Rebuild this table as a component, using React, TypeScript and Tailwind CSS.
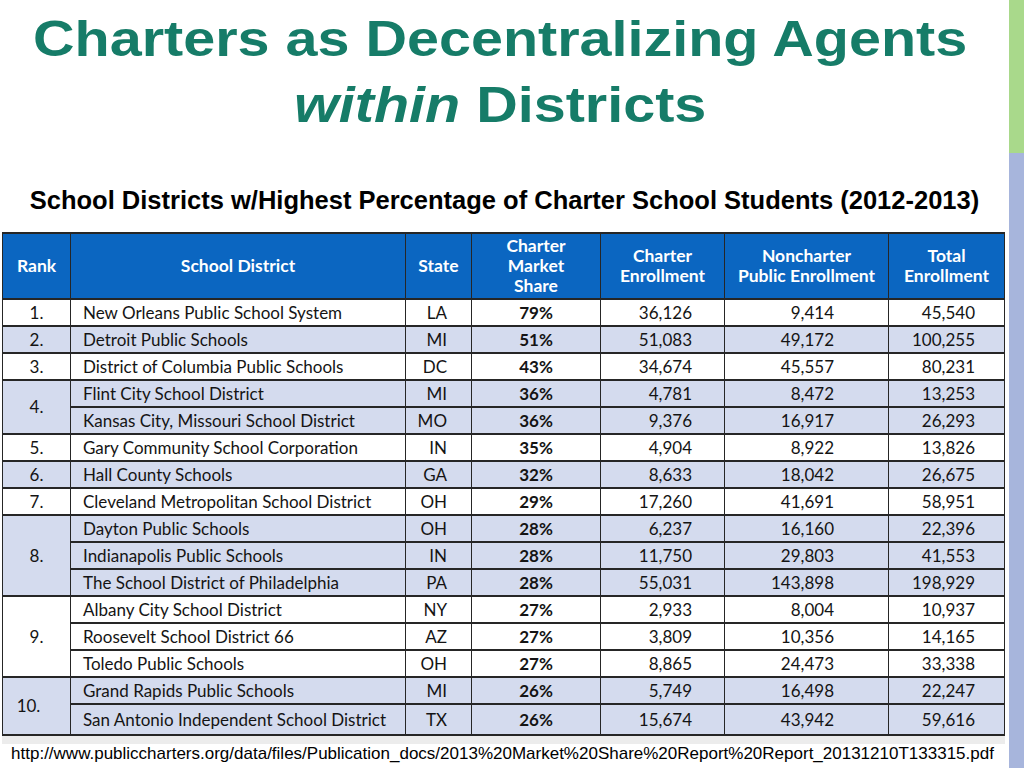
import React from "react";

type Row = {
	rank?: string;
	span?: number;
	district: string;
	state: string;
	share: string;
	charter: string;
	noncharter: string;
	total: string;
	blue: boolean;
};

const rows: Row[] = [
	{ rank: "1.", district: "New Orleans Public School System", state: "LA", share: "79%", charter: "36,126", noncharter: "9,414", total: "45,540", blue: false },
	{ rank: "2.", district: "Detroit Public Schools", state: "MI", share: "51%", charter: "51,083", noncharter: "49,172", total: "100,255", blue: true },
	{ rank: "3.", district: "District of Columbia Public Schools", state: "DC", share: "43%", charter: "34,674", noncharter: "45,557", total: "80,231", blue: false },
	{ rank: "4.", span: 2, district: "Flint City School District", state: "MI", share: "36%", charter: "4,781", noncharter: "8,472", total: "13,253", blue: true },
	{ district: "Kansas City, Missouri School District", state: "MO", share: "36%", charter: "9,376", noncharter: "16,917", total: "26,293", blue: true },
	{ rank: "5.", district: "Gary Community School Corporation", state: "IN", share: "35%", charter: "4,904", noncharter: "8,922", total: "13,826", blue: false },
	{ rank: "6.", district: "Hall County Schools", state: "GA", share: "32%", charter: "8,633", noncharter: "18,042", total: "26,675", blue: true },
	{ rank: "7.", district: "Cleveland Metropolitan School District", state: "OH", share: "29%", charter: "17,260", noncharter: "41,691", total: "58,951", blue: false },
	{ rank: "8.", span: 3, district: "Dayton Public Schools", state: "OH", share: "28%", charter: "6,237", noncharter: "16,160", total: "22,396", blue: true },
	{ district: "Indianapolis Public Schools", state: "IN", share: "28%", charter: "11,750", noncharter: "29,803", total: "41,553", blue: true },
	{ district: "The School District of Philadelphia", state: "PA", share: "28%", charter: "55,031", noncharter: "143,898", total: "198,929", blue: true },
	{ rank: "9.", span: 3, district: "Albany City School District", state: "NY", share: "27%", charter: "2,933", noncharter: "8,004", total: "10,937", blue: false },
	{ district: "Roosevelt School District 66", state: "AZ", share: "27%", charter: "3,809", noncharter: "10,356", total: "14,165", blue: false },
	{ district: "Toledo Public Schools", state: "OH", share: "27%", charter: "8,865", noncharter: "24,473", total: "33,338", blue: false },
	{ rank: "10.", span: 2, district: "Grand Rapids Public Schools", state: "MI", share: "26%", charter: "5,749", noncharter: "16,498", total: "22,247", blue: true },
	{ district: "San Antonio Independent School District", state: "TX", share: "26%", charter: "15,674", noncharter: "43,942", total: "59,616", blue: true },
];

const cell = "border-x border-y-2 border-[#262626] p-0";

export default function App() {
	return (
		<div className="flex h-[768px] w-[1024px] overflow-hidden bg-white">
			<main className="flex w-[1009px] flex-col">
				{/* slide title is a wide heavy sans: Liberation Sans stretched a bit */}
				<h1 className="pt-[6px] pr-[8px] text-center font-['Liberation_Sans',Arial,sans-serif] text-[50px] font-bold leading-[66px] text-[#167c68]">
					<span className="inline-block scale-x-[1.15] whitespace-nowrap">
						Charters as Decentralizing Agents
					</span>
					<br />
					<span className="inline-block scale-x-[1.15] whitespace-nowrap">
						<em>within</em> Districts
					</span>
				</h1>

				<p className="mt-[50px] text-center font-['Liberation_Sans',Arial,sans-serif] text-[25.5px] font-bold leading-[24px] text-black">
					School Districts w/Highest Percentage of Charter School Students (2012-2013)
				</p>

				<table className="mt-[20px] ml-[2px] w-[1002px] table-fixed border-collapse font-['Lato',sans-serif] text-[17px] text-[#141414]">
					<colgroup>
						<col className="w-[68px]" />
						<col className="w-[335px]" />
						<col className="w-[66px]" />
						<col className="w-[129px]" />
						<col className="w-[124px]" />
						<col className="w-[164px]" />
						<col className="w-[116px]" />
					</colgroup>
					<thead>
						<tr className="h-[66px] bg-[#0b66c1] text-[17.5px] font-bold leading-[20px] text-white">
							<th className={cell}>Rank</th>
							<th className={cell}>School District</th>
							<th className={cell}>State</th>
							<th className={cell}>
								Charter
								<br />
								Market
								<br />
								Share
							</th>
							<th className={cell}>
								Charter
								<br />
								Enrollment
							</th>
							<th className={cell}>
								Noncharter
								<br />
								Public Enrollment
							</th>
							<th className={cell}>
								Total
								<br />
								Enrollment
							</th>
						</tr>
					</thead>
					<tbody>
						{rows.map((r, i) => (
							<tr
								className={`${i === rows.length - 1 ? "h-[31px]" : "h-[27px]"} ${r.blue ? "bg-[#d4dbee]" : "bg-white"} leading-[20px]`}
								key={r.district}
							>
								{r.rank && (
									<td
										className={`${cell} text-center ${r.rank === "10." ? "pr-[16px]" : ""}`}
										rowSpan={r.span ?? 1}
									>
										{r.rank}
									</td>
								)}
								<td className={`${cell} pl-[12px] text-left`}>{r.district}</td>
								<td className={`${cell} pr-[24px] text-right`}>{r.state}</td>
								<td className={`${cell} text-center font-bold`}>{r.share}</td>
								<td className={`${cell} pr-[32px] text-right`}>{r.charter}</td>
								<td className={`${cell} pr-[54px] text-right`}>{r.noncharter}</td>
								<td className={`${cell} pr-[29px] text-right`}>{r.total}</td>
							</tr>
						))}
					</tbody>
				</table>
				<div className="ml-[2px] h-[8px] w-[1003px] bg-[#ececec]" />

				<p className="whitespace-nowrap pr-[4px] text-center font-['Liberation_Sans',Arial,sans-serif] text-[17px] leading-[20px] text-black">
					http://www.publiccharters.org/data/files/Publication_docs/2013%20Market%20Share%20Report%20Report_20131210T133315.pdf
				</p>
			</main>
			<aside className="flex w-[15px] flex-col">
				<div className="h-[153px] bg-[#a9d98b]" />
				<div className="flex-1 bg-[#a7b5dc]" />
			</aside>
		</div>
	);
}
